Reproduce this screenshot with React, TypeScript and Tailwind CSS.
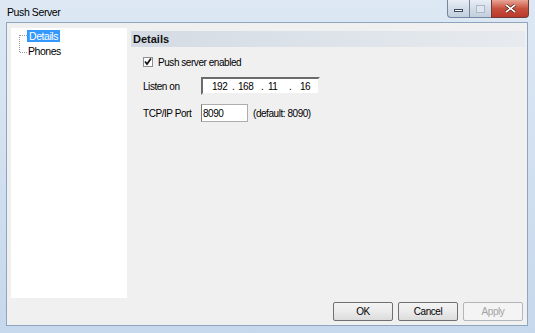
import React from "react";

const glass = "bg-gradient-to-b from-[#e9eef5] via-[#d3dce8] to-[#c3cfde]";
const small = "font-['Liberation_Sans',Arial,sans-serif] text-[10px] tracking-[-0.45px]";

const CaptionButtons = () => (
  <div className="flex self-start mr-[6px]">
    <div className={`w-[22px] h-[18px] border border-[#76869c] border-t-0 border-r-0 rounded-bl-[4px] ${glass} flex items-center justify-center`}>
      <div className="w-[9px] h-[3px] mt-[3px] bg-white border border-[#3c4a60]" />
    </div>
    <div className={`w-[22px] h-[18px] border border-[#76869c] border-t-0 border-r-0 ${glass} flex items-center justify-center`}>
      <div className="w-[9px] h-[8px] border border-[#aeb9c7] bg-[#dfe6ef]" />
    </div>
    <div className="w-[38px] h-[18px] border border-[#6f3b33] border-t-0 rounded-br-[4px] bg-gradient-to-b from-[#e8a596] via-[#c8503e] to-[#b9382b] flex items-center justify-center">
      <svg width="11" height="9" viewBox="0 0 11 9">
        <path d="M1 1 L10 8 M10 1 L1 8" stroke="#4a1a14" strokeWidth="3" />
        <path d="M1 1 L10 8 M10 1 L1 8" stroke="#ffffff" strokeWidth="1.6" />
      </svg>
    </div>
  </div>
);

const Tree = () => (
  <div className="w-[116px] bg-white pt-[2px] pl-[16px] relative font-['Liberation_Sans',Arial,sans-serif] text-[10.5px] tracking-[-0.45px]">
    <svg className="absolute left-[8px] top-[7px]" width="12" height="20">
      <path d="M0.5 0 V17 M1 0.5 H9 M1 17.5 H9" stroke="#9a9a9a" strokeDasharray="1 1" />
    </svg>
    <div className="flex flex-col gap-[3px]">
      <span className="self-start bg-[#3399ff] text-white px-[2px] leading-[12px] h-[12px]">Details</span>
      <span className="self-start px-[1px] leading-[12px] text-black">Phones</span>
    </div>
  </div>
);

const Details = () => (
  <div className="flex-1 flex flex-col pt-[3px]">
    <div className="h-[16px] bg-gradient-to-r from-[#d4dbe4] to-[#e7ebef] flex items-center pl-[2px] font-bold text-[11px] text-[#111]">
      Details
    </div>
    <div className={`pl-[12px] pt-[10px] flex flex-col ${small}`}>
      <div className="flex items-center h-[10px]">
        <div className="w-[10px] h-[10px] border border-[#8e8f8f] bg-white flex items-center justify-center">
          <svg width="8" height="8" viewBox="0 0 8 8">
            <path d="M1 3.5 L3 6 L7 0.5" stroke="#111" strokeWidth="1.7" fill="none" />
          </svg>
        </div>
        <span className="ml-[5px]">Push server enabled</span>
      </div>
      <div className="flex items-center mt-[10px]">
        <span className="w-[58px]">Listen on</span>
        <div className="w-[119px] h-[18px] bg-white border-[2px] border-t-[#6b6b6b] border-l-[#6b6b6b] border-r-[#f0f0f0] border-b-[#f0f0f0] flex items-center pl-[9px]">
          <span className="w-[20px]">192</span>
          <span className="w-[6px]">.</span>
          <span className="w-[23px]">168</span>
          <span className="w-[7px]">.</span>
          <span className="w-[21px]">11</span>
          <span className="w-[11px]">.</span>
          <span>16</span>
        </div>
      </div>
      <div className="flex items-center mt-[9px]">
        <span className="w-[58px]">TCP/IP Port</span>
        <div className="w-[47px] h-[18px] bg-white border border-[#adadad] border-l-[#7a7a7a] flex items-center pl-[1px]">8090</div>
        <span className="ml-[5px]">(default: 8090)</span>
      </div>
    </div>
  </div>
);

const Button = ({ label, disabled }: { label: string; disabled?: boolean }) => (
  <div
    className={`w-[60px] h-[19px] rounded-[2px] border flex items-center justify-center ${
      disabled
        ? "border-[#b4b7ba] bg-[#f4f4f4] text-[#a3a3a3]"
        : "border-[#707070] bg-gradient-to-b from-[#f3f3f3] via-[#ebebeb] to-[#dcdcdc] text-black"
    }`}
  >
    {label}
  </div>
);

export default function App() {
  return (
    <div className="w-[535px] h-[333px] bg-gradient-to-b from-[#dde8f4] to-[#c6d8ec] flex flex-col font-['Liberation_Sans',Arial,sans-serif] text-[11px] text-black overflow-hidden">
      <div className="h-[22px] flex justify-between">
        <span className="pl-[7px] pt-[5px] leading-[14px] text-[10.5px] tracking-[-0.4px] text-black">
          Push Server
        </span>
        <CaptionButtons />
      </div>
      <div className="flex-1 ml-[6px] mr-[7px] mb-[7px] border border-[#8fa4bd] bg-[#f0f0f0] flex flex-col">
        <div className="flex-1 flex gap-[4px] pt-[5px] pl-[4px] pr-[2px]">
          <Tree />
          <Details />
        </div>
        <div className={`h-[27px] flex justify-end items-start gap-[5px] pr-[4px] pt-[4px] ${small}`}>
          <Button label="OK" />
          <Button label="Cancel" />
          <Button label="Apply" disabled />
        </div>
      </div>
    </div>
  );
}
